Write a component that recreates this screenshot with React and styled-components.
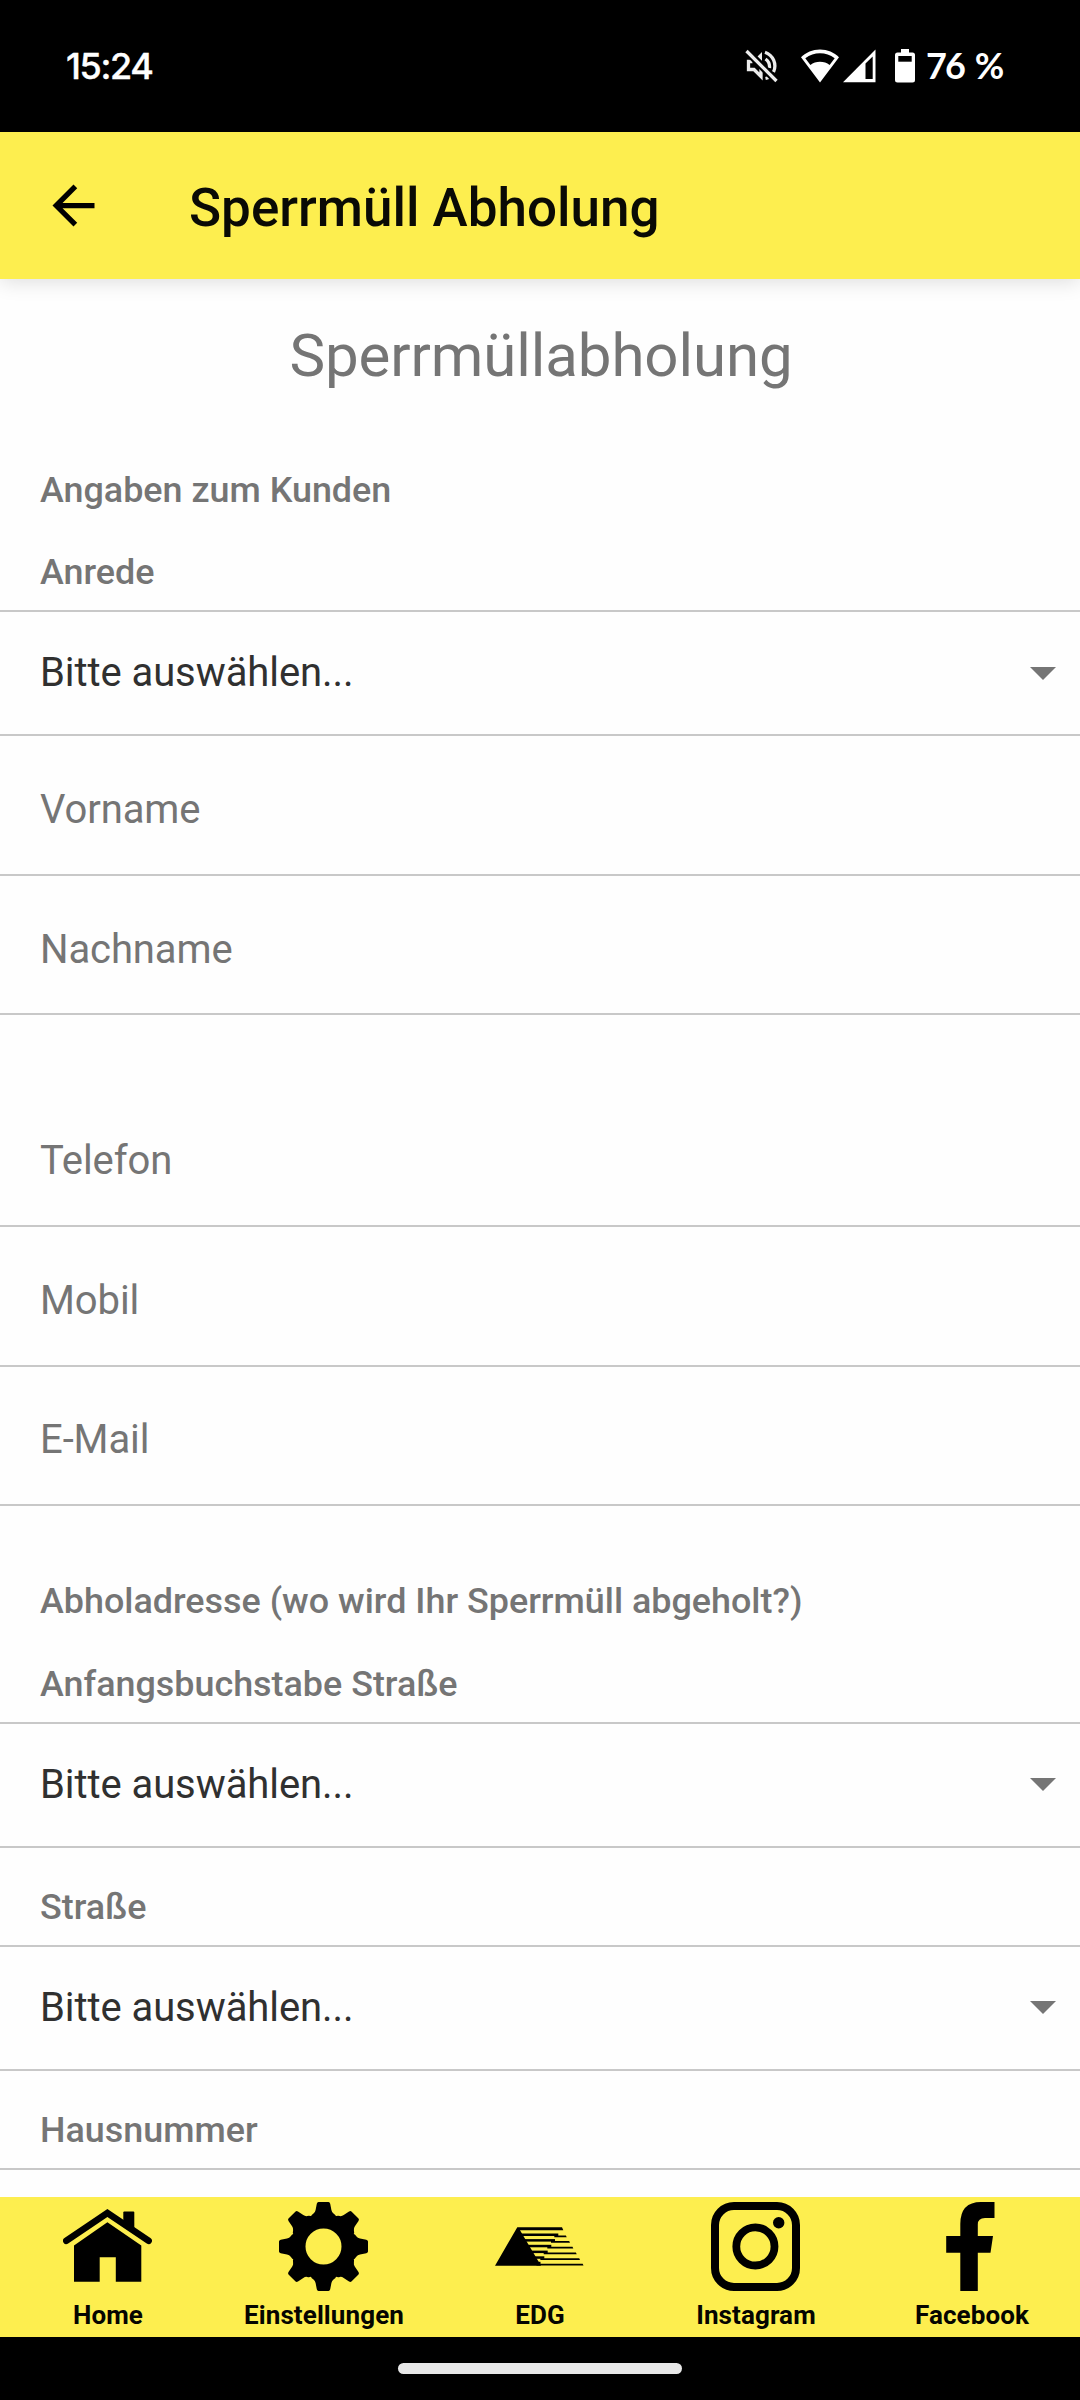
import React from "react";
import styled, { createGlobalStyle } from "styled-components";

const YELLOW = "#fdee4f";
const GREY = "#757575";
const LINE = "#c8c8c8";

const GlobalStyle = createGlobalStyle`
  body {
    margin: 0;
    background: #fefefe;
    font-family: Roboto, "Liberation Sans", sans-serif;
  }
`;

const Screen = styled.div`
  display: flex;
  flex-direction: column;
  width: 1080px;
  height: 2400px;
  overflow: hidden;
  background: #fefefe;
`;

const StatusBar = styled.div`
  display: flex;
  align-items: center;
  flex: none;
  height: 132px;
  box-sizing: border-box;
  padding: 0 76px 0 66px;
  background: #000;
  color: #fff;
`;

const Clock = styled.span`
  flex: 1;
  font: 500 36px/40px Inter, sans-serif;
  letter-spacing: -1.4px;
  -webkit-text-stroke: 0.4px #fff;
`;

const StatusIcons = styled.div`
  display: flex;
  align-items: center;
  svg {
    display: block;
  }
`;

const StatusIcon = styled.svg`
  margin-right: ${(p) => p.$gap}px;
`;

const Battery = styled.span`
  width: 78px;
  font: 700 36px/40px Lato, sans-serif;
  letter-spacing: -1.9px;
  word-spacing: 4px;
  white-space: nowrap;
  padding-bottom: 2px;
`;

const AppBar = styled.header`
  display: flex;
  align-items: center;
  flex: none;
  height: 147px;
  box-sizing: border-box;
  padding-left: 42px;
  background: ${YELLOW};
  box-shadow: 0 2px 20px rgba(0, 0, 0, 0.14);
  z-index: 1;
  position: relative;
`;

const BackIcon = styled.svg`
  width: 63px;
  height: 63px;
  margin-right: 84px;
`;

const AppTitle = styled.h1`
  margin: 0;
  padding-top: 4px;
  font-size: 53px;
  font-weight: 500;
  line-height: 64px;
  color: #0a0a05;
`;

const Form = styled.main`
  flex: 1;
  min-height: 0;
  overflow: hidden;
`;

const Heading = styled.h2`
  margin: 0;
  padding-left: 2px;
  font-size: 60px;
  font-weight: 400;
  line-height: 154px;
  letter-spacing: -0.09px;
  text-align: center;
  color: ${GREY};
`;

const SectionTitle = styled.h3`
  margin: ${(p) => p.$gap}px 0 0;
  padding-left: 40px;
  font-size: 35.9px;
  font-weight: 500;
  line-height: 82px;
  color: ${GREY};
`;

const FieldLabel = styled.label`
  display: flex;
  align-items: flex-end;
  height: ${(p) => p.$height}px;
  padding-left: 40px;
  font-size: 35.9px;
  font-weight: 500;
  line-height: 76px;
  color: ${GREY};
`;

const SelectBox = styled.div`
  display: flex;
  align-items: center;
  justify-content: space-between;
  height: 126px;
  box-sizing: border-box;
  padding: 0 24px 1px 40px;
  border: solid ${LINE};
  border-width: 2px 0;
  font-size: 40px;
  line-height: 48px;
  letter-spacing: -0.08px;
  color: #303030;
`;

const Arrow = styled.svg`
  display: block;
  margin-top: ${(p) => p.$drop}px;
`;

const Divider = styled.div`
  height: 2px;
  background: ${LINE};
`;

const TextField = styled.div`
  display: flex;
  align-items: center;
  height: ${(p) => p.$height || 139}px;
  margin-top: ${(p) => p.$gap || 0}px;
  box-sizing: border-box;
  padding: ${(p) => p.$top || 10}px 40px 0;
  border-bottom: 2px solid ${LINE};
  font-size: 40px;
  line-height: 48px;
  letter-spacing: -0.1px;
  color: ${GREY};
`;

const NavBar = styled.nav`
  display: grid;
  grid-template-columns: repeat(5, 1fr);
  flex: none;
  height: 140px;
  background: ${YELLOW};
`;

const NavItem = styled.a`
  display: flex;
  flex-direction: column;
  align-items: center;
  padding-top: 5px;
  font-size: 26px;
  font-weight: 700;
  line-height: 48px;
  letter-spacing: 0.1px;
  color: #050500;
  svg {
    display: block;
    width: 89px;
    height: 89px;
    margin-right: 1px;
  }
`;

const GestureBar = styled.div`
  display: flex;
  align-items: center;
  justify-content: center;
  flex: none;
  height: 63px;
  background: #000;
`;

const GesturePill = styled.div`
  width: 284px;
  height: 11px;
  border-radius: 6px;
  background: #e8e8e8;
`;

function Select({ arrowDrop = 0 }) {
  return (
    <SelectBox>
      <span>Bitte auswählen...</span>
      <Arrow $drop={arrowDrop} width="26" height="13" viewBox="0 0 26 13">
        <path d="M0 0H26L13 13Z" fill={GREY} />
      </Arrow>
    </SelectBox>
  );
}

const HomeIcon = () => (
  <svg viewBox="0 0 89 89">
    <path d="M60.3 10.5q0-1 1-1h9q1 0 1 1V29L60.3 21Z" />
    <path d="M3.3 38.8 44.4 11 85.6 38.8" fill="none" stroke="#000" strokeWidth="6.6" strokeLinecap="round" />
    <path d="M44.4 20.2 78.3 43.6V79.7H52.8V55.3H36.7V79.7H11V43.6Z" />
  </svg>
);

const GearIcon = () => (
  <svg viewBox="-44.5 -44.5 89 89">
    <circle r="25.2" fill="none" stroke="#000" strokeWidth="14.4" />
    {[0, 45, 90, 135, 180, 225, 270, 315].map((a) => (
      <path
        key={a}
        transform={`rotate(${a})`}
        d="M-13-28.500Q-12.500-32-10-33Q-8.400-34-7.900-36.500L-6.700-42.800Q-6.300-44.500-5-44.500H5Q6.300-44.500 6.700-42.800L7.900-36.500Q8.400-34 10-33Q12.500-32 13-28.500Z"
      />
    ))}
  </svg>
);

const stripes = [
  { y: 32.7, from: 25, mid: 63.3, to: 71.7 },
  { y: 38.3, from: 28, mid: 60, to: 75 },
  { y: 44, from: 31, mid: 56.3, to: 78.3 },
  { y: 49.8, from: 35, mid: 52.7, to: 81.7 },
  { y: 55.5, from: 38, mid: 49.3, to: 85 },
  { y: 61, from: 42, mid: 45.5, to: 88.5 },
];

const EdgIcon = () => (
  <svg viewBox="0 0 89 89">
    <path d="M22.300 25.300H67L68.300 28.300H25L46 63.700H0Z" />
    {stripes.map((s) => (
      <g key={s.y}>
        <path d={`M${s.from} ${s.y - 1.2}H${s.mid}V${s.y + 1.3}H${s.from}Z`} />
        <path d={`M${s.mid - 4} ${s.y + 0.7}H${s.to - 0.8}L${s.to} ${s.y + 2.5}H${s.mid - 4}Z`} />
      </g>
    ))}
  </svg>
);

const InstagramIcon = () => (
  <svg viewBox="0 0 89 89">
    <rect x="4" y="4" width="81" height="81" rx="19" fill="none" stroke="#000" strokeWidth="8" />
    <circle cx="44.4" cy="44.4" r="19.1" fill="none" stroke="#000" strokeWidth="7.8" />
    <circle cx="67.7" cy="20.7" r="5.7" />
  </svg>
);

const FacebookIcon = () => (
  <svg viewBox="0 0 89 89">
    <path d="M67.500 0V16H58Q50.800 16 50.800 22.500V34H66L63.500 50.700H50.800V89H33.300V50.700H19.200V34H33.300V22Q33.300 0 54 0Z" />
  </svg>
);

const navItems = [
  { label: "Home", Icon: HomeIcon },
  { label: "Einstellungen", Icon: GearIcon },
  { label: "EDG", Icon: EdgIcon },
  { label: "Instagram", Icon: InstagramIcon },
  { label: "Facebook", Icon: FacebookIcon },
];

export default function App() {
  return (
    <>
      <GlobalStyle />
      <Screen>
        <StatusBar>
          <Clock>15:24</Clock>
          <StatusIcons>
            <StatusIcon $gap={23} width="33" height="34" viewBox="0 0 33 34" fill="none" stroke="#ececec" strokeWidth="3.3">
              <path d="M7.500 12.500H3.500V20.500H9L16 27.500V20" />
              <path d="M12.500 7.500 17 3V12Z" fill="#ececec" stroke="none" />
              <path d="M20 3.200A14.500 14.500 0 0 1 28.500 23M20.500 10Q25 13 24.500 19M20.500 29.500Q23 29 25 27.500" />
              <path d="M1.500 2 31.500 32" stroke="#000" strokeWidth="7.500" />
              <path d="M1.500 2 31.500 32" />
            </StatusIcon>
            <StatusIcon $gap={4} width="38" height="34" viewBox="0 0 38 34">
              <path d="M19 .5C11.500 .5 5 3.500 0 8.300L19 33.500 38 8.300C33 3.500 26.500 .5 19 .5Z" fill="#fff" />
              <path d="M4.300 9.200Q11 4.200 19 4.200T33.700 9.200L28.600 16Q24.500 12.800 19 12.800T9.400 16Z" fill="#000" />
            </StatusIcon>
            <StatusIcon $gap={19} width="33" height="34" viewBox="0 0 33 34">
              <path d="M32.500 .5V33.300H0Z" fill="#fff" />
              <path d="M22.500 14.500 29.700 7.500V30H22.500Z" fill="#000" />
            </StatusIcon>
            <StatusIcon $gap={11} width="20" height="34" viewBox="0 0 20 34">
              <path d="M6 0H14V3.500H17.500Q20 3.500 20 6V31Q20 33.500 17.500 33.500H2.500Q0 33.500 0 31V6Q0 3.500 2.500 3.500H6Z" fill="#fff" />
              <path d="M3.300 7H16.700V12.700H3.300Z" fill="#000" />
            </StatusIcon>
            <Battery>76 %</Battery>
          </StatusIcons>
        </StatusBar>

        <AppBar>
          <BackIcon viewBox="0 0 24 24">
            <path d="M20 11H7.830l5.590-5.590L12 4l-8 8 8 8 1.410-1.410L7.830 13H20v-2z" />
          </BackIcon>
          <AppTitle>Sperrmüll Abholung</AppTitle>
        </AppBar>

        <Form>
          <Heading>Sperrmüllabholung</Heading>

          <SectionTitle $gap={16}>Angaben zum Kunden</SectionTitle>
          <FieldLabel $height={79}>Anrede</FieldLabel>
          <Select arrowDrop={2} />
          <TextField $height={140}>Vorname</TextField>
          <TextField>Nachname</TextField>
          <TextField $gap={73} $top={8}>Telefon</TextField>
          <TextField $height={140}>Mobil</TextField>
          <TextField $top={8}>E-Mail</TextField>

          <SectionTitle $gap={54}>Abholadresse (wo wird Ihr Sperrmüll abgeholt?)</SectionTitle>
          <FieldLabel $height={80}>Anfangsbuchstabe Straße</FieldLabel>
          <Select />
          <FieldLabel $height={97}>Straße</FieldLabel>
          <Select />
          <FieldLabel $height={97}>Hausnummer</FieldLabel>
          <Divider />
        </Form>

        <NavBar>
          {navItems.map(({ label, Icon }) => (
            <NavItem key={label}>
              <Icon />
              {label}
            </NavItem>
          ))}
        </NavBar>
        <GestureBar>
          <GesturePill />
        </GestureBar>
      </Screen>
    </>
  );
}
